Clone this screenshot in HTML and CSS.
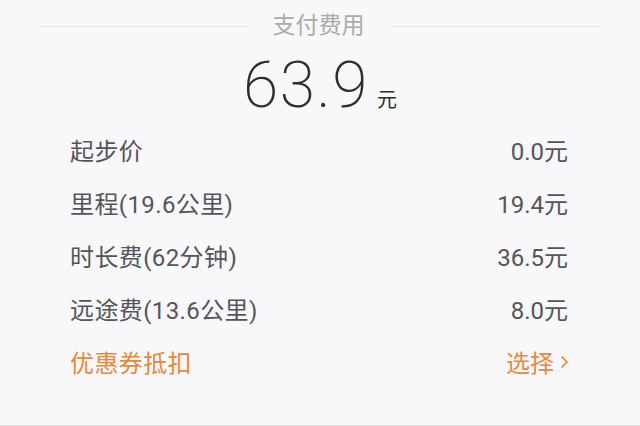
FILE: index.html
```html
<!DOCTYPE html>
<html lang="zh-CN">
<head>
<meta charset="utf-8">
<link rel="stylesheet" href="styles.css">
</head>
<body>
<div class="page">
  <div class="header">
    <span class="rule"></span>
    <span class="title">支付费用</span>
    <span class="rule"></span>
  </div>
  <div class="amount">
    <span class="num">63.9</span><span class="unit">元</span>
  </div>
  <div class="list">
    <div class="row"><span class="label">起步价</span><span>0.0元</span></div>
    <div class="row"><span class="label">里程(19.6公里)</span><span>19.4元</span></div>
    <div class="row"><span class="label">时长费(62分钟)</span><span>36.5元</span></div>
    <div class="row"><span class="label">远途费(13.6公里)</span><span>8.0元</span></div>
    <div class="row coupon"><span class="label">优惠券抵扣</span><span class="pick">选择<svg class="chev" width="10" height="16" viewBox="0 0 10 16"><path d="M2.5 2.5 L8 8 L2.5 13.5" fill="none" stroke="currentColor" stroke-width="1.7"/></svg></span></div>
  </div>
</div>
</body>
</html>
```

FILE: styles.css
```css
html, body {
  margin: 0;
  padding: 0;
  background: #f8f7fa;
}
body {
  font-family: Roboto, "Noto Sans CJK SC", sans-serif;
  color: #555559;
}
.page {
  width: 640px;
  height: 425px;
  border-bottom: 1px solid #dcdcde;
  overflow: hidden;
}
.header {
  display: flex;
  align-items: center;
  height: 52px;
  padding: 0 38px 0 37px;
}
.rule {
  flex: 1;
  height: 1px;
  background: #e7e6ea;
}
.title {
  font-size: 23px;
  color: #ababae;
  padding: 0 26px 0 24px;
  line-height: 52px;
}
.amount {
  display: flex;
  justify-content: center;
  align-items: baseline;
  height: 71px;
}
.num {
  font-size: 64px;
  font-weight: 200;
  line-height: 68px;
  color: #2e2e31;
  letter-spacing: 1.5px;
}
.unit {
  font-size: 20px;
  margin-left: 8px;
  color: #2e2e31;
}
.list {
  padding: 0 72px 0 70px;
}
.row {
  display: flex;
  justify-content: space-between;
  align-items: center;
  height: 53px;
  font-size: 24px;
}
.label {
  letter-spacing: 0.4px;
}
.coupon {
  color: #e8883a;
}
.pick {
  display: flex;
  align-items: center;
}
.chev {
  margin-left: 5px;
  margin-right: -1px;
}
```
